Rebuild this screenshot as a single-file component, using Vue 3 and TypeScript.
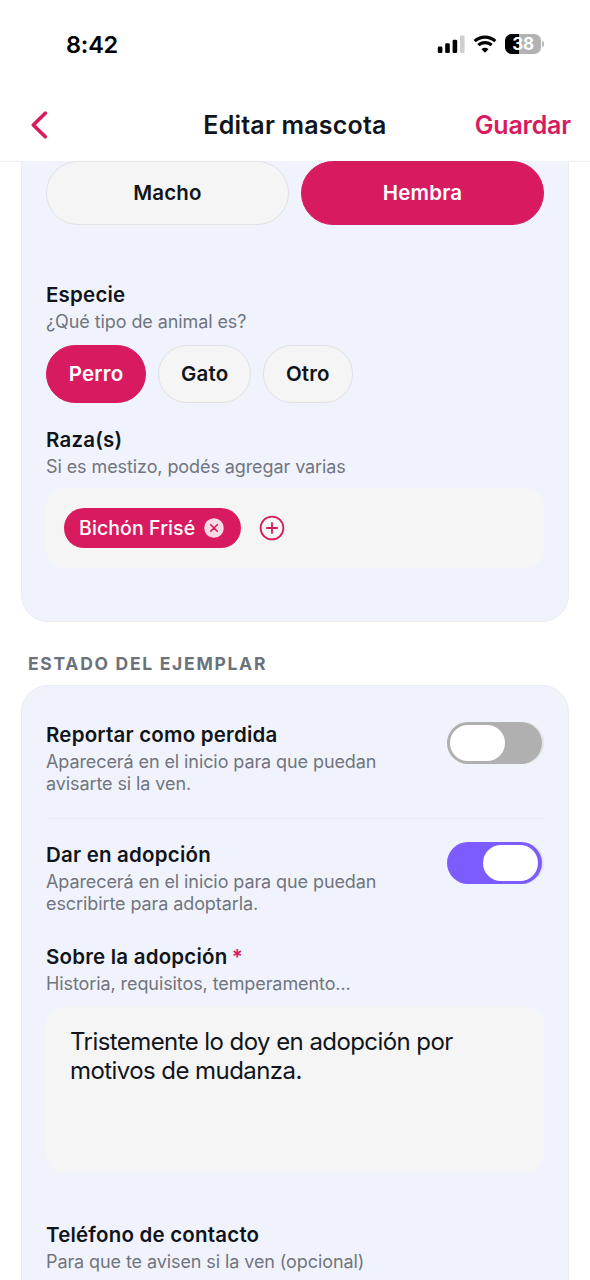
<script setup lang="ts">
import { ref } from 'vue'

type Sex = 'Macho' | 'Hembra'
type Species = 'Perro' | 'Gato' | 'Otro'

const sexes: Sex[] = ['Macho', 'Hembra']
const speciesList: Species[] = ['Perro', 'Gato', 'Otro']

const sex = ref<Sex>('Hembra')
const species = ref<Species>('Perro')
const breeds = ref<string[]>(['Bichón Frisé'])
const lost = ref(false)
const adoption = ref(true)
const about = ref('Tristemente lo doy en adopción por motivos de mudanza.')

function removeBreed(name: string): void {
  breeds.value = breeds.value.filter((b) => b !== name)
}
</script>

<template>
  <div class="screen">
    <div class="status">
      <span class="clock">8:42</span>
      <div class="indicators">
        <svg class="signal" width="28" height="20" viewBox="0 0 28 20">
          <rect x="0.8" y="12.6" width="4.6" height="6.4" rx="1.3" />
          <rect x="8.2" y="9.2" width="4.6" height="9.8" rx="1.3" />
          <rect x="15.6" y="5.8" width="4.6" height="13.2" rx="1.3" />
          <rect x="23" y="1.6" width="4.6" height="17.4" rx="1.3" class="dim" />
        </svg>
        <svg class="wifi" width="24" height="18" viewBox="0 0 24 18">
          <path d="M1.7 6.2A14.8 14.8 0 0 1 22.3 6.2" />
          <path d="M5.4 10.2A9.5 9.5 0 0 1 18.6 10.2" />
          <path class="dot" d="M12 17.8L8.5 14.3A5 5 0 0 1 15.5 14.3Z" />
        </svg>
        <div class="battery"><span>38</span></div>
        <i class="nub"></i>
      </div>
    </div>

    <header class="nav">
      <button class="back" aria-label="Volver">
        <svg width="20" height="30" viewBox="0 0 20 30">
          <path d="M15.3 3.2L3.3 15L15.3 26.8" />
        </svg>
      </button>
      <h1>Editar mascota</h1>
      <button class="save">Guardar</button>
    </header>

    <main>
      <section class="card first">
        <div class="sexes">
          <button
            v-for="s in sexes"
            :key="s"
            class="pill"
            :class="{ on: s === sex }"
            @click="sex = s"
          >{{ s }}</button>
        </div>

        <h2 class="label especie">Especie</h2>
        <p class="hint">¿Qué tipo de animal es?</p>
        <div class="species">
          <button
            v-for="s in speciesList"
            :key="s"
            class="pill"
            :class="{ on: s === species }"
            @click="species = s"
          >{{ s }}</button>
        </div>

        <h2 class="label raza">Raza(s)</h2>
        <p class="hint">Si es mestizo, podés agregar varias</p>
        <div class="breeds">
          <span v-for="b in breeds" :key="b" class="chip">
            {{ b }}
            <svg width="20" height="20" viewBox="0 0 20 20" @click="removeBreed(b)">
              <circle cx="10" cy="10" r="9.8" />
              <path d="M6.7 6.7L13.3 13.3M13.3 6.7L6.7 13.3" />
            </svg>
          </span>
          <svg class="add" width="26" height="26" viewBox="0 0 26 26">
            <circle cx="13" cy="13" r="11.4" />
            <path d="M13 7.9V18.1M7.9 13H18.1" />
          </svg>
        </div>
      </section>

      <h3 class="section-title">ESTADO DEL EJEMPLAR</h3>

      <section class="card second">
        <div class="row">
          <div class="text">
            <h2 class="label">Reportar como perdida</h2>
            <p class="hint">Aparecerá en el inicio para que puedan avisarte si la ven.</p>
          </div>
          <div class="switch" :class="{ on: lost }" role="switch" @click="lost = !lost"><i></i></div>
        </div>
        <div class="divider"></div>
        <div class="row">
          <div class="text">
            <h2 class="label">Dar en adopción</h2>
            <p class="hint">Aparecerá en el inicio para que puedan escribirte para adoptarla.</p>
          </div>
          <div class="switch" :class="{ on: adoption }" role="switch" @click="adoption = !adoption"><i></i></div>
        </div>

        <h2 class="label sobre">Sobre la adopción <b>*</b></h2>
        <p class="hint">Historia, requisitos, temperamento...</p>
        <div class="about">{{ about }}</div>

        <h2 class="label phone">Teléfono de contacto</h2>
        <p class="hint">Para que te avisen si la ven (opcional)</p>
      </section>
    </main>
  </div>
</template>

<style>
body {
  margin: 0;
  background: #fff;
}
</style>

<style scoped>
.screen {
  width: 590px;
  height: 1280px;
  overflow: hidden;
  background: #fff;
  color: #11151b;
  font-family: Inter, 'Liberation Sans', sans-serif;
  display: flex;
  flex-direction: column;
}
.screen * {
  box-sizing: border-box;
}
h1, h2, h3, p {
  margin: 0;
}
button {
  font: inherit;
  color: inherit;
  background: none;
  border: 0;
  padding: 0;
}
.status {
  flex: none;
  height: 90px;
  padding: 0 46px 2px 66px;
  display: flex;
  align-items: center;
  justify-content: space-between;
  color: #000;
}
.clock {
  font-size: 23.5px;
  font-weight: 600;
  letter-spacing: -0.2px;
}
.indicators {
  display: flex;
  align-items: center;
}
.signal .dim {
  fill: #cfcfcf;
}
.wifi {
  margin-left: 8px;
  fill: none;
  stroke: #000;
  stroke-width: 3.2;
}
.wifi .dot {
  fill: #000;
  stroke: none;
}
.battery {
  width: 36px;
  height: 20px;
  margin-left: 8px;
  border-radius: 6.5px;
  background: linear-gradient(90deg, #000 14px, #b2b2b2 14px);
  color: #fff;
  font-size: 17px;
  font-weight: 700;
  line-height: 20px;
  text-align: center;
  letter-spacing: -0.3px;
}
.nub {
  width: 2px;
  height: 6px;
  margin-left: 1px;
  border-radius: 0 2px 2px 0;
  background: #b9b9b9;
}
.nav {
  flex: none;
  height: 72px;
  margin-bottom: -1px;
  border-bottom: 1px solid #eceef1;
  padding: 0 19px 2px 30px;
  display: grid;
  grid-template-columns: 1fr auto 1fr;
  align-items: center;
}
.back {
  justify-self: start;
  height: 30px;
  line-height: 0;
}
.back path {
  fill: none;
  stroke: #d81b60;
  stroke-width: 3.7;
  stroke-linecap: round;
  stroke-linejoin: round;
}
h1 {
  font-size: 25px;
  line-height: 30px;
  font-weight: 600;
  letter-spacing: 0.2px;
  margin-left: -11px;
}
.save {
  justify-self: end;
  color: #d81b60;
  font-size: 25px;
  line-height: 30px;
  font-weight: 600;
  letter-spacing: -0.2px;
}
main {
  padding: 0 21px;
}
.card {
  background: #f0f3fc;
  border: 1px solid #e9ecf1;
  padding: 0 24px;
}
.card.first {
  height: 461px;
  border-top: 0;
  border-radius: 0 0 27px 27px;
}
.card.second {
  height: 640px;
  border-radius: 27px;
  padding-top: 36px;
}
.sexes {
  display: grid;
  grid-template-columns: 1fr 1fr;
  gap: 12px;
}
.pill {
  height: 58px;
  border: 1.5px solid #e2e2e5;
  border-radius: 29px;
  background: #f5f5f5;
  font-size: 20.5px;
  font-weight: 600;
  line-height: 26px;
  letter-spacing: 0.17px;
}
.sexes .pill {
  height: 64px;
  border-radius: 32px;
}
.pill.on {
  background: #d81b60;
  border-color: #d81b60;
  color: #fff;
}
.label {
  font-size: 20.5px;
  line-height: 26px;
  font-weight: 600;
  letter-spacing: 0.2px;
}
.label b {
  color: #d81b60;
  font-weight: 600;
  margin-left: -1px;
}
.hint {
  margin-top: 3px;
  font-size: 18px;
  line-height: 22px;
  color: #71757f;
  letter-spacing: -0.09px;
}
.especie {
  margin-top: 57px;
}
.species {
  display: flex;
  gap: 12px;
  margin-top: 12px;
}
.species .pill {
  padding: 0 21.8px;
}
.raza {
  margin-top: 24px;
}
.breeds {
  height: 80px;
  margin-top: 10px;
  border-radius: 18px;
  background: #f5f5f5;
  padding: 0 18px;
  display: flex;
  align-items: center;
  gap: 18px;
}
.chip {
  height: 40px;
  border-radius: 20px;
  background: #d81b60;
  color: #fff;
  padding: 0 17px 0 15px;
  display: flex;
  align-items: center;
  gap: 9px;
  font-size: 19.5px;
  font-weight: 500;
  letter-spacing: 0.1px;
}
.chip circle {
  fill: #fad9e6;
}
.chip path {
  stroke: #d81b60;
  stroke-width: 1.6;
  stroke-linecap: round;
}
.add {
  fill: none;
  stroke: #d81b60;
  stroke-width: 1.8;
  stroke-linecap: round;
}
.section-title {
  margin: 30px 0 9px 7px;
  font-size: 17.5px;
  line-height: 24px;
  font-weight: 700;
  letter-spacing: 1.72px;
  color: #6b727b;
}
.row {
  display: flex;
  justify-content: space-between;
  align-items: flex-start;
}
.row .text {
  width: 350px;
}
.switch {
  width: 97px;
  height: 42px;
  border-radius: 21px;
  background: #e4e4e7;
  display: flex;
}
.switch::before {
  content: '';
  width: 95px;
  height: 42px;
  border-radius: 21px;
  background: #b0b0b1;
}
.switch i {
  width: 55px;
  height: 36px;
  border-radius: 18px;
  background: #fff;
  margin: 3px 0 0 -92px;
}
.switch.on::before {
  background: #7c5cff;
}
.switch.on i {
  margin-left: -59px;
}
.divider {
  height: 1px;
  margin: 23px 0;
  background: #e9ecf1;
}
.sobre {
  margin-top: 29px;
}
.about {
  height: 165px;
  margin-top: 12px;
  border-radius: 18px;
  background: #f5f5f5;
  padding: 21px 24px;
  font-size: 24px;
  line-height: 28.5px;
  letter-spacing: -0.57px;
}
.phone {
  margin-top: 50px;
}
</style>
